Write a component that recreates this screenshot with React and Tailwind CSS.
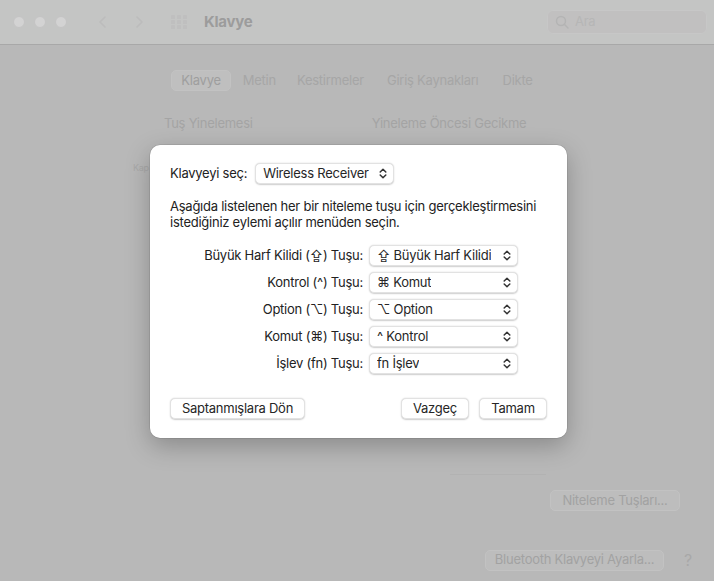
import React from 'react';

const font = { fontFamily: 'Inter, "Noto Sans", "DejaVu Sans", sans-serif' };

function UpDown({ className = '' }) {
  return (
    <svg width="8" height="11" viewBox="0 0 8 11" className={className} fill="none" stroke="currentColor" strokeWidth="1.5" strokeLinecap="round" strokeLinejoin="round">
      <path d="M1.2 4 L4 1.2 L6.8 4" />
      <path d="M1.2 7 L4 9.8 L6.8 7" />
    </svg>
  );
}

function Popup({ children, width }) {
  return (
    <div className={`flex items-center justify-between h-[21px] ${width} rounded-[5px] bg-white border border-[#e2e2e2] shadow-[0_0.5px_1.5px_rgba(0,0,0,0.2)] pl-[7px] pr-[6px] text-[13px] text-[#262626]`}>
      <span className="truncate">{children}</span>
      <UpDown className="text-[#333]" />
    </div>
  );
}

function Button({ children, width }) {
  return (
    <div className={`flex items-center justify-center h-[21px] ${width} rounded-[5px] bg-white border border-[#e2e2e2] shadow-[0_0.5px_1.5px_rgba(0,0,0,0.2)] text-[13px] text-[#262626]`}>
      {children}
    </div>
  );
}

const rows = [
  ['Büyük Harf Kilidi (⇪) Tuşu:', '⇪ Büyük Harf Kilidi'],
  ['Kontrol (^) Tuşu:', '⌘ Komut'],
  ['Option (⌥) Tuşu:', '⌥ Option'],
  ['Komut (⌘) Tuşu:', '^ Kontrol'],
  ['İşlev (fn) Tuşu:', 'fn İşlev'],
];

function Background() {
  return (
    <div className="flex flex-col h-[581px] bg-[#b8b8b8] text-[#a2a2a2]">
      {/* title bar */}
      <div className="flex items-center h-[45px] shrink-0 bg-[#c4c5c4] border-b border-[#a8a8a8] px-[13px]">
        <div className="flex gap-[9px]">
          <div className="w-[12px] h-[12px] rounded-full bg-[#d3d3d3] border border-[#c4c4c4]" />
          <div className="w-[12px] h-[12px] rounded-full bg-[#d3d3d3] border border-[#c4c4c4]" />
          <div className="w-[12px] h-[12px] rounded-full bg-[#d3d3d3] border border-[#c4c4c4]" />
        </div>
        <svg width="10" height="14" viewBox="0 0 10 14" className="ml-[31px] text-[#bcbcbc]" fill="none" stroke="currentColor" strokeWidth="1.6" strokeLinecap="round" strokeLinejoin="round"><path d="M7 2 L2 7 L7 12" /></svg>
        <svg width="10" height="14" viewBox="0 0 10 14" className="ml-[26px] text-[#bcbcbc]" fill="none" stroke="currentColor" strokeWidth="1.6" strokeLinecap="round" strokeLinejoin="round"><path d="M3 2 L8 7 L3 12" /></svg>
        <svg width="20" height="14" viewBox="0 0 20 14" className="ml-[26px] text-[#bfbfbf]" fill="currentColor">
          {[0, 5, 10].map((y) => [0, 6, 12].map((x) => <rect key={`${x}-${y}`} x={x + 1} y={y} width="4" height="4" rx="0.5" />))}
        </svg>
        <div className="ml-[14px] text-[15px] font-bold text-[#9c9c9c]">Klavye</div>
        <div className="ml-auto mr-[-6px] flex items-center gap-[6px] w-[160px] h-[24px] rounded-[6px] bg-[#c1c0c0] border border-[#c7c7c7] px-[7px]">
          <svg width="14" height="14" viewBox="0 0 14 14" fill="none" stroke="#b4b4b4" strokeWidth="1.5"><circle cx="6" cy="6" r="4.5" /><path d="M9.3 9.3 L13 13" strokeLinecap="round" /></svg>
          <span className="text-[13px] text-[#b6b6b6]">Ara</span>
        </div>
      </div>
      {/* tabs */}
      <div className="flex justify-center mt-[25px]">
        <div className="flex items-center text-[13px] text-[#a6a6a6] ml-[2px]">
          <div className="px-[9px] h-[21px] flex items-center rounded-[5px] bg-[#bfbfbf] border border-[#c2c2c2] text-[#9e9e9e]">Klavye</div>
          <div className="ml-[2px] px-[10px]">Metin</div>
          <div className="px-[11px]">Kestirmeler</div>
          <div className="px-[12px]">Giriş Kaynakları</div>
          <div className="px-[12px]">Dikte</div>
        </div>
      </div>
      <div className="flex mt-[23px] text-[13px] text-[#a4a4a4]">
        <div className="ml-[164px]">Tuş Yinelemesi</div>
        <div className="ml-[119px]">Yineleme Öncesi Gecikme</div>
      </div>
      <div className="ml-[133px] mt-[27px] text-[9px] text-[#a8a8a8]">Kap</div>
      <div className="flex-1" />
      <div className="flex flex-col">
        <div className="ml-[450px] w-[96px] h-px bg-[#b2b2b2]" />
        <div className="flex justify-end pr-[34px] mt-[15px]">
          <div className="flex items-center justify-center w-[130px] h-[21px] rounded-[5px] bg-[#bdbdbd] border border-[#c2c2c2] text-[13px] text-[#a2a2a2]">Niteleme Tuşları...</div>
        </div>
        <div className="flex items-center justify-end pr-[22px] mt-[37px] mb-[9px] gap-[20px]">
          <div className="flex items-center justify-center w-[179px] h-[21px] rounded-[5px] bg-[#bdbdbd] border border-[#c2c2c2] text-[13px] text-[#a2a2a2]">Bluetooth Klavyeyi Ayarla...</div>
          <div className="text-[16px] text-[#a8a8a8]">?</div>
        </div>
      </div>
    </div>
  );
}

export default function App() {
  return (
    <div className="relative w-[714px] h-[581px] overflow-hidden tracking-[-0.25px]" style={font}>
      <Background />
      <div className="absolute left-[150px] top-[145px] w-[417px] h-[293px] bg-white rounded-[10px] shadow-[0_0_0_0.5px_rgba(0,0,0,0.15),0_8px_24px_rgba(0,0,0,0.25)] px-[20px] pt-[18px] text-[13px] text-[#222]">
        <div className="flex items-center gap-[8px]">
          <span>Klavyeyi seç:</span>
          <Popup width="w-[139px]">Wireless Receiver</Popup>
        </div>
        <p className="mt-[14px] leading-[16px]">
          Aşağıda listelenen her bir niteleme tuşu için gerçekleştirmesini istediğiniz eylemi açılır menüden seçin.
        </p>
        <div className="mt-[15px] flex flex-col gap-[6px]">
          {rows.map(([label, value]) => (
            <div key={label} className="flex items-center">
              <div className="w-[199px] text-right pr-[6px]">{label}</div>
              <Popup width="w-[149px]">{value}</Popup>
            </div>
          ))}
        </div>
        <div className="flex items-center mt-[24px]">
          <Button width="w-[135px]">Saptanmışlara Dön</Button>
          <div className="flex-1" />
          <Button width="w-[68px]">Vazgeç</Button>
          <div className="w-[10px]" />
          <Button width="w-[68px]">Tamam</Button>
        </div>
      </div>
    </div>
  );
}
